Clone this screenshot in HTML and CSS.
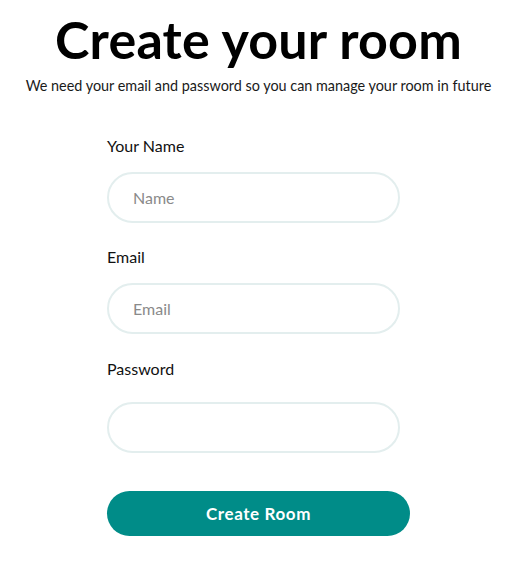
FILE: index.html
```html
<!DOCTYPE html>
<html>
<head>
<meta charset="utf-8">
<link rel="stylesheet" href="styles.css">
</head>
<body>
<div class="page">
  <h1 class="title">Create your room</h1>
  <p class="subtitle">We need your email and password so you can manage your room in future</p>
  <form class="form">
    <label class="label">Your Name</label>
    <input class="input" type="text" placeholder="Name">
    <label class="label">Email</label>
    <input class="input input-email" type="text" placeholder="Email">
    <label class="label">Password</label>
    <input class="input input-pass" type="password">
    <button class="button" type="button">Create Room</button>
  </form>
</div>
</body>
</html>
```
FILE: styles.css
```css
html, body {
  margin: 0;
  padding: 0;
  background: #ffffff;
}
.page {
  width: 517px;
  font-family: "Lato", "Liberation Sans", sans-serif;
  color: #111;
}
.title {
  margin: 0;
  padding-top: 11px;
  text-align: center;
  font-size: 52px;
  line-height: 56px;
  font-weight: 700;
  letter-spacing: 0.2px;
  color: #000;
}
.subtitle {
  margin: 9px 0 0;
  text-align: center;
  font-size: 14.4px;
  line-height: 20px;
  color: #1a1a1a;
}
.form {
  display: flex;
  flex-direction: column;
  align-items: flex-start;
  padding-left: 107px;
  margin-top: 40px;
}
.label {
  font-size: 16px;
  line-height: 20px;
  color: #111;
}
.input {
  box-sizing: border-box;
  width: 293px;
  height: 51px;
  margin: 16px 0 24px;
  border: 2px solid #e3eeee;
  border-radius: 26px;
  padding: 0 24px;
  font-family: inherit;
  font-size: 16px;
  color: #333;
  outline: none;
  background: #fff;
}
.input-email {
  margin-bottom: 25px;
}
.input-pass {
  margin-top: 23px;
}
.input::placeholder {
  color: #8a8a8a;
}
.button {
  margin-top: 14px;
  width: 303px;
  height: 45px;
  border: none;
  border-radius: 23px;
  background: #008c88;
  color: #fff;
  font-family: inherit;
  font-size: 17px;
  font-weight: 700;
  letter-spacing: 0.6px;
}
```
